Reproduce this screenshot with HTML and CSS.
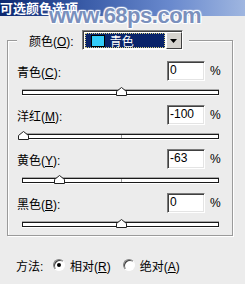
FILE: index.html
```html
<!DOCTYPE html>
<html lang="zh-CN">
<head>
    <meta charset="UTF-8">
    <title>可选颜色选项</title>
    <link rel="stylesheet" href="styles.css">
</head>
<body>
<div class="dialog">
    <div class="titlebar">可选颜色选项</div>
    <div class="watermark">www.68ps.com</div>

    <fieldset class="group">
        <legend class="group-head">
            <div class="head-inner">
                <span class="head-label">颜色(<u>O</u>):</span>
                <span class="select">
                    <span class="select-value"><span class="swatch"></span><span>青色</span></span>
                    <span class="select-btn">
                        <svg width="7" height="4" viewBox="0 0 7 4"><polygon points="0,0 7,0 3.5,4" fill="#000"/></svg>
                    </span>
                </span>
            </div>
        </legend>

        <div class="row">
            <div class="line">
                <span class="label">青色(<u>C</u>):</span>
                <span class="field">0</span>
                <span class="pct">%</span>
            </div>
            <div class="slider">
                <span class="thumb" style="left: 50%"><svg width="11" height="9" viewBox="0 0 11 9"><polygon points="0.5,8.5 0.5,4.5 5.5,0.5 10.5,4.5 10.5,8.5" fill="#fff" stroke="#222"/></svg></span>
            </div>
        </div>

        <div class="row">
            <div class="line">
                <span class="label">洋红(<u>M</u>):</span>
                <span class="field">-100</span>
                <span class="pct">%</span>
            </div>
            <div class="slider">
                <span class="thumb" style="left: 0%"><svg width="11" height="9" viewBox="0 0 11 9"><polygon points="0.5,8.5 0.5,4.5 5.5,0.5 10.5,4.5 10.5,8.5" fill="#fff" stroke="#222"/></svg></span>
            </div>
        </div>

        <div class="row">
            <div class="line">
                <span class="label">黄色(<u>Y</u>):</span>
                <span class="field">-63</span>
                <span class="pct">%</span>
            </div>
            <div class="slider">
                <span class="thumb" style="left: 18.5%"><svg width="11" height="9" viewBox="0 0 11 9"><polygon points="0.5,8.5 0.5,4.5 5.5,0.5 10.5,4.5 10.5,8.5" fill="#fff" stroke="#222"/></svg></span>
            </div>
        </div>

        <div class="row">
            <div class="line">
                <span class="label">黑色(<u>B</u>):</span>
                <span class="field">0</span>
                <span class="pct">%</span>
            </div>
            <div class="slider">
                <span class="thumb" style="left: 50%"><svg width="11" height="9" viewBox="0 0 11 9"><polygon points="0.5,8.5 0.5,4.5 5.5,0.5 10.5,4.5 10.5,8.5" fill="#fff" stroke="#222"/></svg></span>
            </div>
        </div>
    </fieldset>

    <div class="method">
        <span class="method-label">方法:</span>
        <span class="opt"><span class="radio checked"></span><span>相对(<u>R</u>)</span></span>
        <span class="opt"><span class="radio"></span><span>绝对(<u>A</u>)</span></span>
    </div>
</div>
</body>
</html>
```

FILE: styles.css
```css
body {
    margin: 0;
    background: #ececec;
    font-family: "Liberation Sans", "Noto Sans CJK SC", sans-serif;
    font-size: 12px;
    color: #000;
}
.dialog {
    position: relative;
    width: 245px;
    height: 284px;
    overflow: hidden;
}
.titlebar {
    height: 16px;
    line-height: 16px;
    background: linear-gradient(to right, #0c2870, #3a5ca8 35%, #6a8ace 70%, #9fb6e0);
    color: #fff;
    font-weight: bold;
    font-size: 13px;
    font-family: "Noto Sans CJK SC", sans-serif;
    white-space: nowrap;
}
.watermark {
    position: absolute;
    left: 49px;
    top: 3px;
    font-family: "Liberation Sans", sans-serif;
    font-weight: bold;
    font-size: 22px;
    line-height: 26px;
    letter-spacing: -0.5px;
    color: #7a90bd;
    text-shadow: 0 0 1px #fff, 0 0 2px #fff, 0 0 2px #fff, 1px 1px 1px #fff, -1px -1px 1px #fff, 1px -1px 1px #fff, -1px 1px 1px #fff;
}
.group {
    margin: 14px 0 0 7px;
    width: 226px;
    min-width: 0;
    box-sizing: border-box;
    padding: 11px 11px 8px 9px;
    border: 1px solid #9a9a9a;
    box-shadow: inset 1px 1px #fff, 1px 1px #fff;
}
.group-head {
    padding: 0 6px 0 12px;
    background: #ececec;
}
.head-inner {
    display: flex;
    align-items: center;
    height: 20px;
}
.head-label {
    margin-right: 8px;
}
.select {
    display: flex;
    width: 101px;
    height: 20px;
    box-sizing: border-box;
    border: 1px solid;
    border-color: #808080 #fff #fff #808080;
    box-shadow: inset 1px 1px #404040;
    background: #fff;
    padding: 1px 0 0 1px;
}
.select-value {
    flex: 1;
    display: flex;
    align-items: center;
    background: #0a246a;
    color: #fff;
    margin: 1px;
    outline: 1px dotted #d8d080;
    outline-offset: -1px;
}
.swatch {
    width: 12px;
    height: 10px;
    background: #33ccf8;
    border: 1px solid #000;
    margin: 0 5px 0 6px;
}
.select-btn {
    width: 16px;
    display: flex;
    align-items: center;
    justify-content: center;
    box-sizing: border-box;
    background: #d6d3ce;
    border: 1px solid;
    border-color: #fff #404040 #404040 #fff;
}
.row + .row {
    margin-top: 10px;
}
.line {
    display: flex;
    align-items: center;
    height: 20px;
}
.label {
    flex: 1;
}
.field {
    width: 38px;
    height: 20px;
    box-sizing: border-box;
    padding-left: 2px;
    line-height: 16px;
    background: #fff;
    border: 1px solid;
    border-color: #7a7a7a #fff #fff #7a7a7a;
    box-shadow: inset 1px 1px #404040, inset -1px -1px #e4e4e4;
}
.pct {
    width: 11px;
    margin-left: 5px;
}
.slider {
    position: relative;
    margin: 9px 0 0 5px;
    width: 197px;
    height: 5px;
    box-sizing: border-box;
    border: 1px solid #1a1a1a;
    background: #fff;
    box-shadow: 0 -1px #a8a8a8, 0 1px #fff;
}
.slider::after {
    content: "";
    position: absolute;
    left: 50%;
    top: 0;
    bottom: 0;
    width: 1px;
    background: #a0a0a0;
}
.thumb {
    position: absolute;
    top: -4px;
    margin-left: -5px;
    width: 11px;
    height: 9px;
    z-index: 1;
}
.thumb svg {
    display: block;
}
.method {
    display: flex;
    align-items: center;
    margin-top: 22px;
    padding-left: 16px;
    height: 14px;
}
.method-label {
    width: 37px;
}
.opt {
    display: flex;
    align-items: center;
    gap: 5px;
    margin-right: 12px;
}
.radio {
    position: relative;
    width: 12px;
    height: 12px;
    box-sizing: border-box;
    border-radius: 50%;
    background: #fff;
    border: 1px solid;
    border-color: #808080 #fff #fff #808080;
    box-shadow: inset 1px 1px #404040;
}
.radio.checked::after {
    content: "";
    position: absolute;
    left: 3px;
    top: 3px;
    width: 4px;
    height: 4px;
    border-radius: 50%;
    background: #000;
}
```
